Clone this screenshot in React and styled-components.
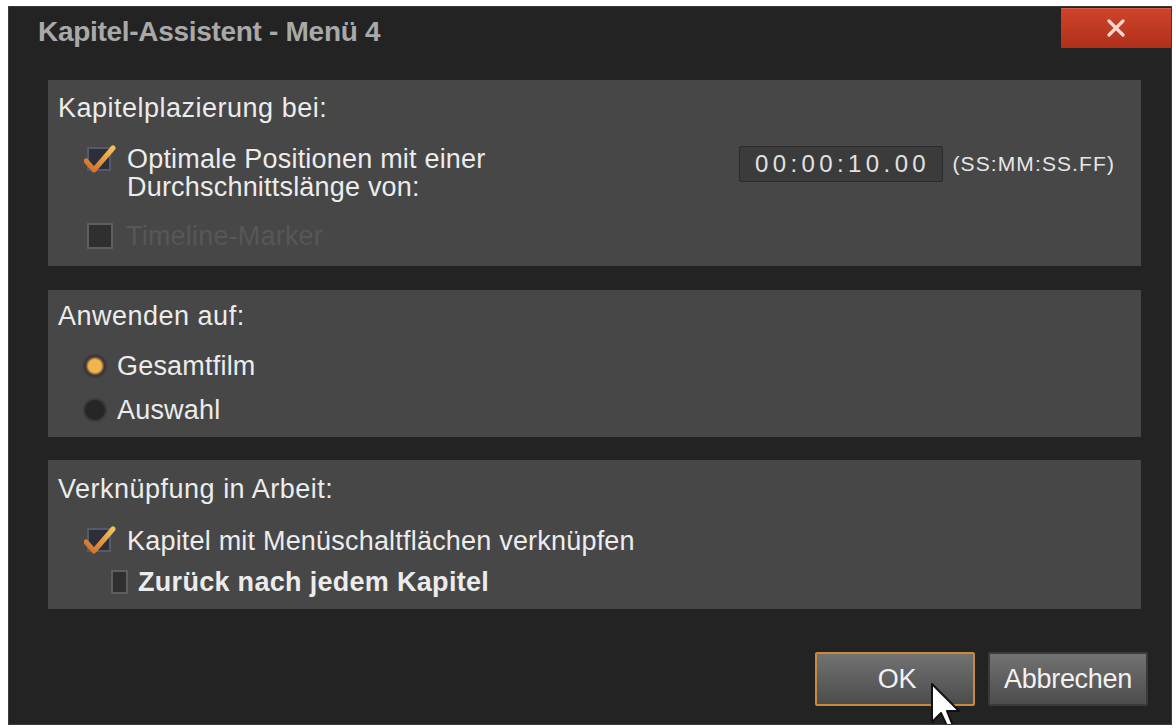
import React from 'react';
import styled, { createGlobalStyle } from 'styled-components';

const GlobalStyle = createGlobalStyle`
  html, body {
    margin: 0;
    padding: 0;
    background: #ffffff;
  }
  body {
    font-family: 'Liberation Sans', Arial, sans-serif;
  }
`;

const Dialog = styled.div`
  position: relative;
  box-sizing: border-box;
  margin: 6px 0 0 8px;
  width: 1164px;
  height: 719px;
  background: #232323;
  border: 1px solid #3c3c3c;
  display: flex;
  flex-direction: column;
  padding: 0 30px 18px 39px;
  overflow: hidden;
`;

const TitleBar = styled.div`
  display: flex;
  justify-content: space-between;
  align-items: flex-start;
  height: 73px;
  margin: 0 -30px 0 -10px;
`;

const Title = styled.div`
  padding-top: 9px;
  font-size: 28px;
  font-weight: 700;
  color: #a9a9a9;
  letter-spacing: -0.3px;
`;

const CloseButton = styled.div`
  width: 110px;
  height: 40px;
  margin-top: 1px;
  background: linear-gradient(#cf4429, #b0301c);
  display: flex;
  align-items: center;
  justify-content: center;
  box-shadow: inset 0 1px 0 rgba(255, 255, 255, 0.15);
`;

const Panel = styled.div`
  background: #474747;
  display: flex;
  flex-direction: column;
  padding: ${(p) => p.$pad};
  margin-bottom: ${(p) => p.$after || 0}px;
  height: ${(p) => p.$height}px;
  box-sizing: border-box;
`;

const SectionLabel = styled.div`
  padding-left: 10px;
  font-size: 27px;
  line-height: 28px;
  letter-spacing: 0.5px;
  color: #ececec;
  margin-bottom: ${(p) => p.$after}px;
`;

const Row = styled.div`
  display: flex;
  align-items: ${(p) => p.$align || 'center'};
  padding-left: ${(p) => p.$indent}px;
  margin-top: ${(p) => p.$top || 0}px;
`;

const OptionText = styled.div`
  font-size: 27px;
  line-height: 28px;
  letter-spacing: ${(p) => (p.$bold ? 0.3 : 0.2)}px;
  font-weight: ${(p) => (p.$bold ? 700 : 400)};
  color: ${(p) => (p.$disabled ? '#575757' : '#ececec')};
  margin-left: ${(p) => p.$gap}px;
`;

const Spacer = styled.div`
  flex: 1;
`;

const TimeField = styled.div`
  width: 204px;
  height: 36px;
  box-sizing: border-box;
  margin-top: 1px;
  background: #3b3b3b;
  border: 1px solid #2b2b2b;
  border-radius: 2px;
  display: flex;
  align-items: center;
  justify-content: center;
  padding-left: 4px;
  font-size: 24px;
  letter-spacing: 4.4px;
  color: #e2e2e2;
`;

const FormatHint = styled.div`
  margin: 1px 26px 0 10px;
  line-height: 36px;
  font-size: 21px;
  letter-spacing: 1.1px;
  color: #e6e6e6;
`;

const Box = styled.div`
  width: ${(p) => p.$w}px;
  height: ${(p) => p.$h}px;
  box-sizing: border-box;
  background: #2f2f2f;
  border: 2px solid #5e5e5e;
  flex-shrink: 0;
`;

const CheckWrap = styled.div`
  position: relative;
  width: 32px;
  height: 30px;
  flex-shrink: 0;
`;

const CheckBoxUnder = styled.div`
  position: absolute;
  left: 3px;
  top: 2px;
  width: 24px;
  height: 24px;
  box-sizing: border-box;
  background: #2c2f3a;
  border: 2px solid #55596a;
`;

const CheckMark = styled.svg`
  position: absolute;
  left: 0;
  top: 0;
`;

const Radio = styled.div`
  width: 24px;
  height: 24px;
  box-sizing: border-box;
  border-radius: 50%;
  flex-shrink: 0;
  background: ${(p) => (p.$on ? 'radial-gradient(circle, #f0b453 0 45%, #7a5a2a 60%, #2e2e2e 70%)' : '#262626')};
  border: 2px solid ${(p) => (p.$on ? '#3a3a44' : '#3a3a3a')};
`;

const Footer = styled.div`
  margin: auto -7px 0 0;
  display: flex;
  justify-content: flex-end;
  gap: 13px;
`;

const Button = styled.div`
  width: 160px;
  height: 54px;
  box-sizing: border-box;
  display: flex;
  align-items: center;
  justify-content: center;
  font-size: 27px;
  letter-spacing: -0.3px;
  color: #f2f2f2;
  background: linear-gradient(#727272, #4c4c4c);
  border: 2px solid ${(p) => (p.$focus ? '#c98a3c' : '#3a3a3a')};
  border-radius: 2px;
  padding-left: ${(p) => (p.$focus ? 4 : 0)}px;
`;

const Cursor = styled.svg`
  position: absolute;
  left: 921px;
  top: 675px;
`;

const Checked = () => (
  <CheckWrap>
    <CheckBoxUnder />
    <CheckMark width="32" height="30" viewBox="0 0 32 30">
      <defs>
        <linearGradient id="chk" x1="0" y1="1" x2="1" y2="0">
          <stop offset="0" stopColor="#d06a2a" />
          <stop offset="1" stopColor="#f3c25a" />
        </linearGradient>
      </defs>
      <path
        d="M2 16 L10 25 L29 3"
        fill="none"
        stroke="url(#chk)"
        strokeWidth="5"
        strokeLinecap="round"
        strokeLinejoin="round"
      />
    </CheckMark>
  </CheckWrap>
);

const App = () => {
  return (
    <>
      <GlobalStyle />
      <Dialog>
        <TitleBar>
          <Title>Kapitel-Assistent - Menü 4</Title>
          <CloseButton>
            <svg width="18" height="18" viewBox="0 0 18 18">
              <path d="M2 2 L16 16 M16 2 L2 16" stroke="#f4d6cf" strokeWidth="3.2" strokeLinecap="round" />
            </svg>
          </CloseButton>
        </TitleBar>

        <Panel $pad="14px 0 0 0" $height={186} $after={24}>
          <SectionLabel $after={23}>Kapitelplazierung bei:</SectionLabel>
          <Row $indent={36} $align="flex-start">
            <Checked />
            <OptionText $gap={11}>
              Optimale Positionen mit einer
              <br />
              Durchschnittslänge von:
            </OptionText>
            <Spacer />
            <TimeField>00:00:10.00</TimeField>
            <FormatHint>(SS:MM:SS.FF)</FormatHint>
          </Row>
          <Row $indent={39} $top={21}>
            <Box $w={26} $h={26} />
            <OptionText $gap={13} $disabled>Timeline-Marker</OptionText>
          </Row>
        </Panel>

        <Panel $pad="12px 0 0 0" $height={147} $after={23}>
          <SectionLabel $after={22}>Anwenden auf:</SectionLabel>
          <Row $indent={35}>
            <Radio $on />
            <OptionText $gap={10}>Gesamtfilm</OptionText>
          </Row>
          <Row $indent={35} $top={16}>
            <Radio />
            <OptionText $gap={10}>Auswahl</OptionText>
          </Row>
        </Panel>

        <Panel $pad="15px 0 0 0" $height={149}>
          <SectionLabel $after={23}>Verknüpfung in Arbeit:</SectionLabel>
          <Row $indent={36}>
            <Checked />
            <OptionText $gap={11}>Kapitel mit Menüschaltflächen verknüpfen</OptionText>
          </Row>
          <Row $indent={63} $top={12}>
            <Box $w={17} $h={24} />
            <OptionText $gap={10} $bold>Zurück nach jedem Kapitel</OptionText>
          </Row>
        </Panel>

        <Footer>
          <Button $focus>OK</Button>
          <Button>Abbrechen</Button>
        </Footer>

        <Cursor width="32" height="54" viewBox="0 0 32 54">
          <path
            d="M2 2 L2 40 L11 31 L18 46 L23 44 L17 29 L29 29 Z"
            fill="#ffffff"
            stroke="#111111"
            strokeWidth="2"
            strokeLinejoin="round"
          />
        </Cursor>
      </Dialog>
    </>
  );
};

export default App;
